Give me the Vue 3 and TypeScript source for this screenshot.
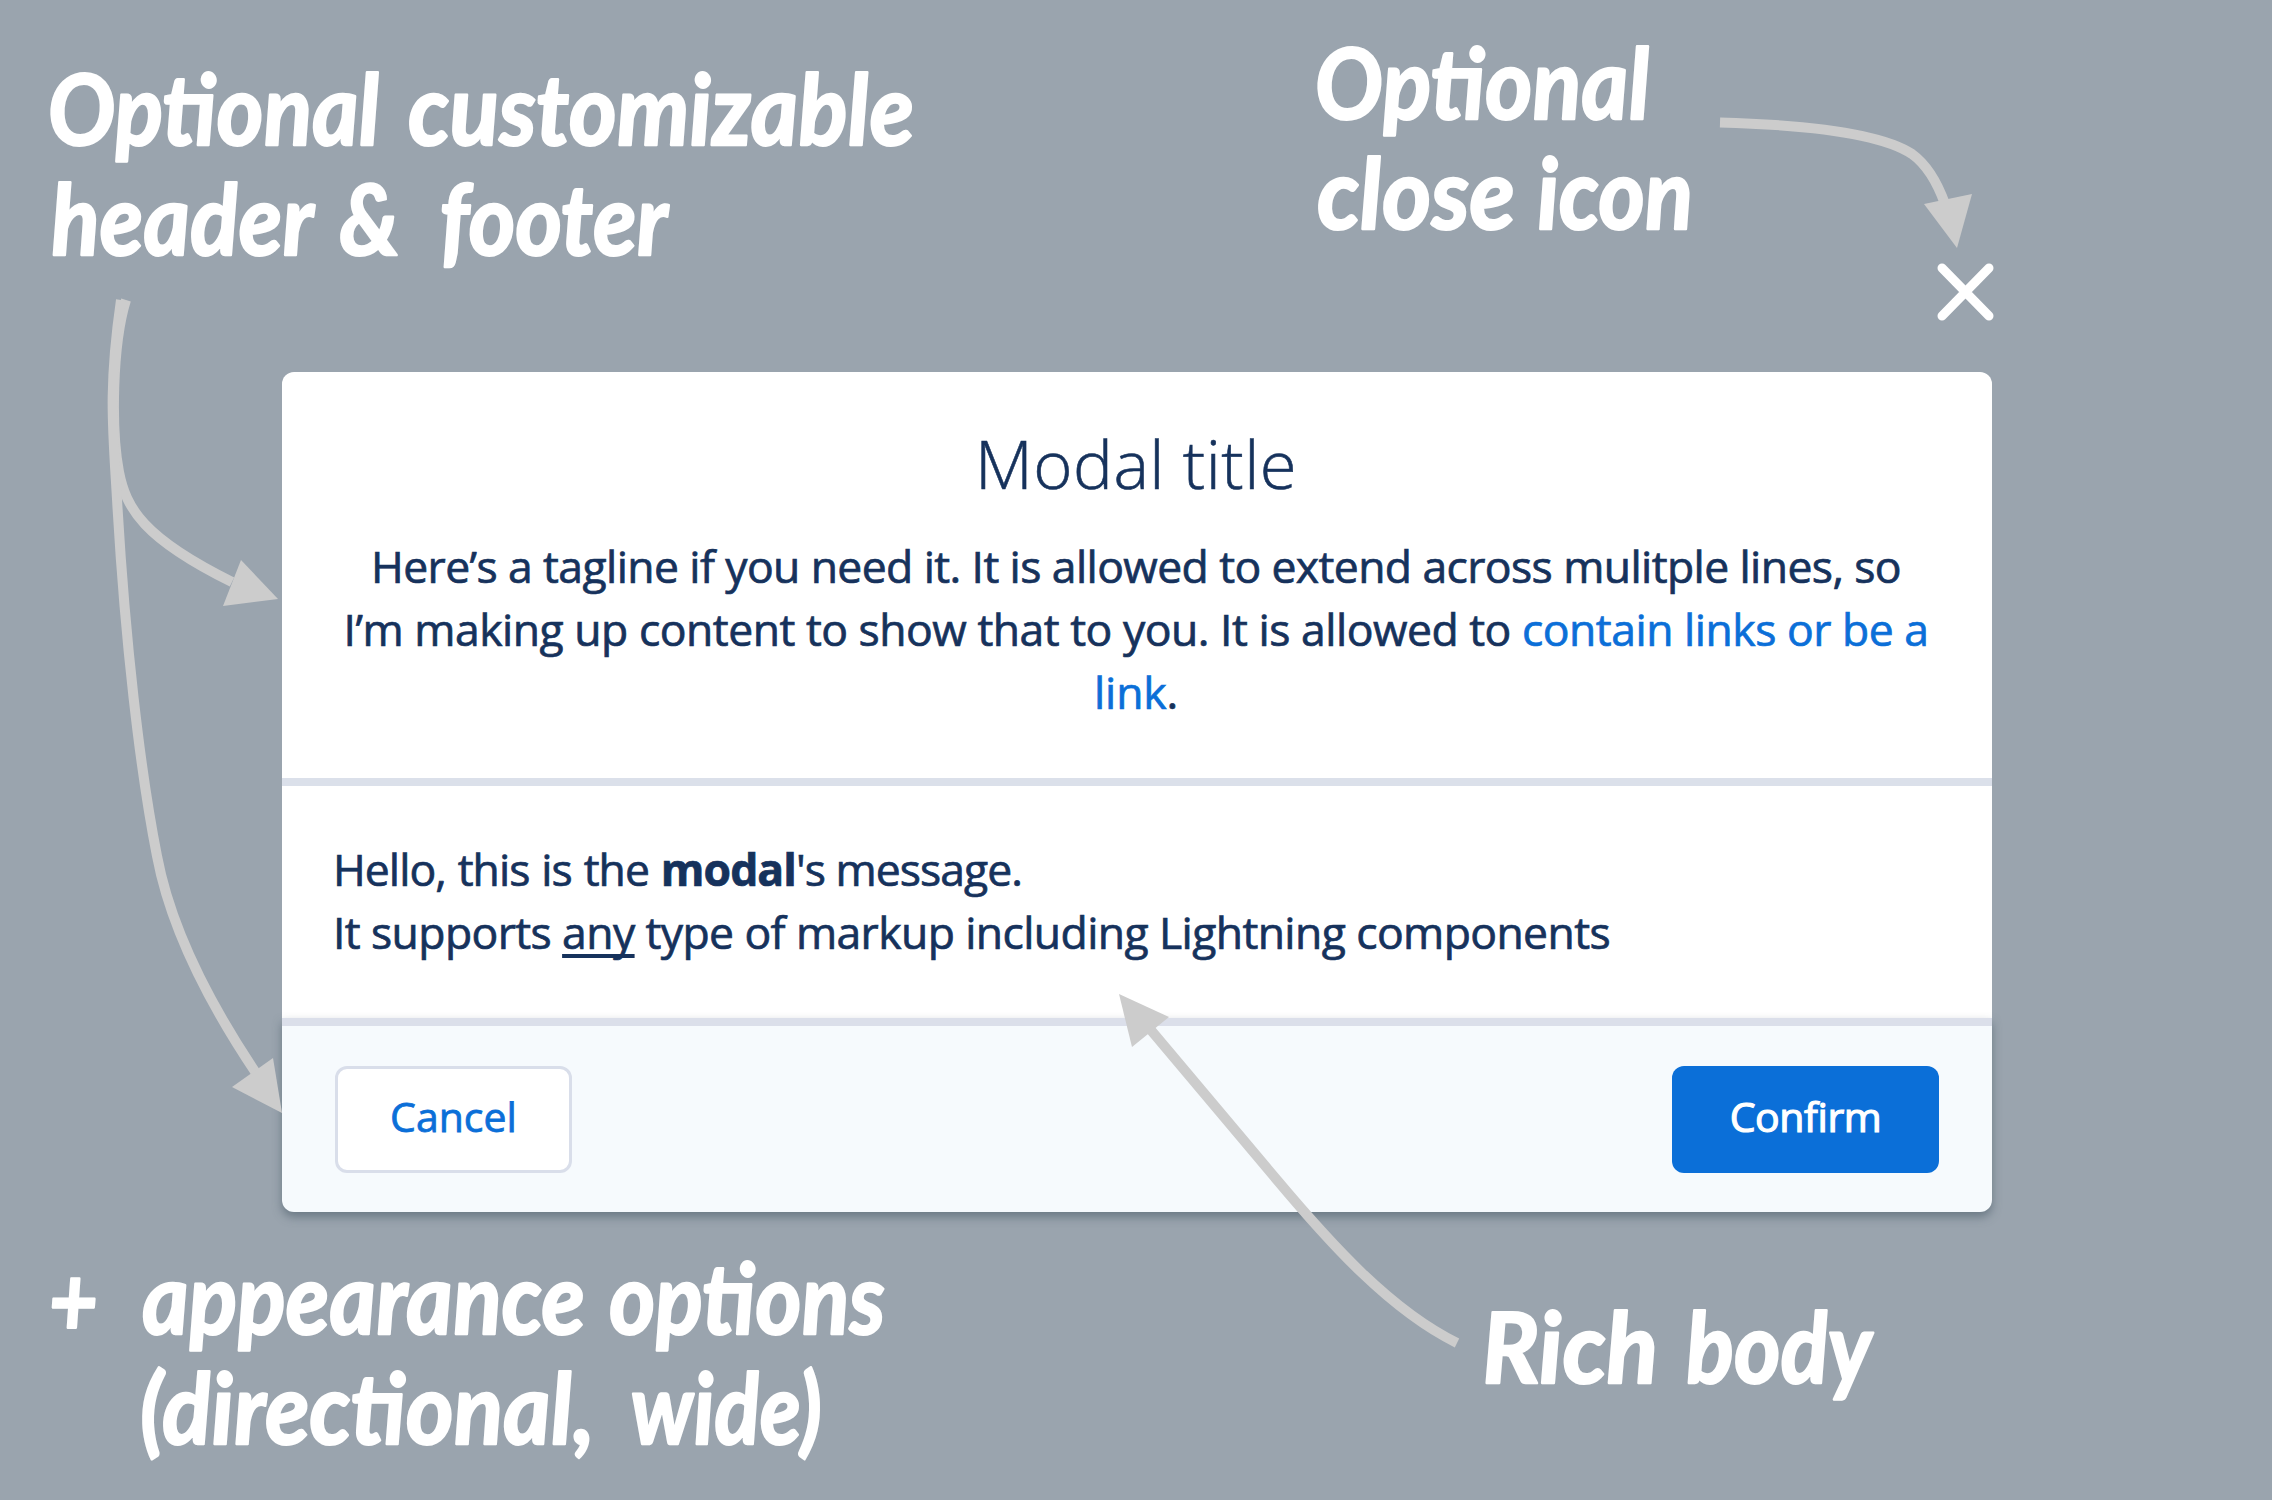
<script setup lang="ts">
interface Note {
  text: string
  x: number
  y: number
  width: number
}

// Handwritten notes: left edge, baseline and drawn width of every word.
const notes: Note[] = [
  { text: 'Optional', x: 49, y: 145, width: 332 },
  { text: 'customizable', x: 409, y: 145, width: 506 },
  { text: 'header', x: 52, y: 255, width: 263 },
  { text: '&', x: 340, y: 255, width: 60 },
  { text: 'footer', x: 441, y: 255, width: 228 },
  { text: 'Optional', x: 1316, y: 119, width: 335 },
  { text: 'close', x: 1318, y: 229, width: 198 },
  { text: 'icon', x: 1538, y: 229, width: 156 },
  { text: '+', x: 50, y: 1336, width: 49 },
  { text: 'appearance', x: 143, y: 1334, width: 443 },
  { text: 'options', x: 610, y: 1334, width: 276 },
  { text: '(directional,', x: 141, y: 1444, width: 454 },
  { text: 'wide)', x: 632, y: 1444, width: 191 },
  { text: 'Rich', x: 1483, y: 1383, width: 176 },
  { text: 'body', x: 1687, y: 1383, width: 186 },
]

// Tracks a line of text so that it spans the requested width.
const vFit = {
  mounted(el: HTMLElement, binding: { value: number }) {
    const natural = el.getBoundingClientRect().width
    const count = (el.textContent ?? '').length
    el.style.letterSpacing = `${(binding.value - natural) / count}px`
  },
}
</script>

<template>
  <main class="stage">
    <section class="modal">
      <header class="modal-header">
        <h2><span v-fit="322" class="line">Modal title</span></h2>
        <p>
          <span v-fit="1530" class="line">Here’s a tagline if you need it. It is allowed to extend across mulitple lines, so</span><br />
          <span v-fit="1585" class="line">I’m making up content to show that to you. It is allowed to <a>contain links or be a</a></span><br />
          <span v-fit="84" class="line"><a>link</a>.</span>
        </p>
      </header>
      <div class="modal-body">
        <p>
          <span v-fit="689" class="line"><span class="lead">Hello, this is the </span><strong>modal</strong>'s message.</span><br />
          <span v-fit="1277" class="line">It supports <u>any</u> type of markup including Lightning components</span>
        </p>
      </div>
      <footer class="modal-footer">
        <button class="cancel" type="button">Cancel</button>
        <button class="confirm" type="button">Confirm</button>
      </footer>
    </section>

    <svg class="overlay" viewBox="0 0 2272 1500" width="2272" height="1500">
      <g class="arrows">
        <path d="M1720 122.5C1815 125 1882 134 1912 154C1930 167 1940 190 1945 204" />
        <path d="M126 300C112 345 111 430 119 472C126 508 143 538 232 582" />
        <path d="M121 300C108 390 113 430 117 499C125 640 140 770 157 856C170 925 205 997 256 1073" />
        <path d="M1150 1029L1277 1180C1330 1243 1390 1310 1457 1343" />
      </g>
      <g class="heads">
        <path d="M1924 204L1972 194L1957 248Z" />
        <path d="M223 606L241 560L278 599Z" />
        <path d="M232 1087L273 1058L282 1113Z" />
        <path d="M1119 994L1169 1017L1132 1047Z" />
      </g>
      <path class="close" d="M1942 268L1989 316M1989 268L1942 316" />
      <text
        v-for="(note, index) in notes"
        :key="index"
        class="note"
        :transform="`translate(${note.x} ${note.y}) skewX(2)`"
        :textLength="note.width"
        lengthAdjust="spacingAndGlyphs"
      >{{ note.text }}</text>
    </svg>
  </main>
</template>

<style>
body {
  background: #9aa4ae;
}
</style>

<style scoped>
.stage {
  position: relative;
  box-sizing: border-box;
  width: 2272px;
  height: 1500px;
  padding: 372px 280px 0 282px;
  overflow: hidden;
  background: #9aa4ae;
  color: #16325c;
  font-family: 'Open Sans', 'Noto Sans', sans-serif;
}

.modal {
  display: flex;
  flex-direction: column;
  width: 1710px;
  height: 840px;
}

.modal-header {
  box-sizing: border-box;
  height: 414px;
  padding-top: 47px;
  border-bottom: 8px solid #dbe0ea;
  border-radius: 12px 12px 0 0;
  background: #fff;
  text-align: center;
}

h2 {
  margin: 0;
  font-size: 67px;
  font-weight: 300;
  line-height: 88px;
  -webkit-text-stroke: 0.6px currentColor;
}

p {
  margin: 0;
  font-size: 44.5px;
  line-height: 63px;
  white-space: nowrap;
  -webkit-text-stroke: 0.7px currentColor;
}

.modal-header p {
  margin-top: 27px;
}

.line {
  display: inline-block;
}

.modal-header .line {
  margin-right: 2px;
}

.lead {
  word-spacing: 1.3px;
}

a {
  color: #0b6fd8;
}

u {
  text-decoration-thickness: 4px;
  text-underline-offset: 5px;
  text-decoration-skip-ink: none;
}

.modal-body {
  box-sizing: border-box;
  height: 232px;
  padding: 51px 51px 0;
  background: #fff;
}

.modal-footer {
  box-sizing: border-box;
  display: flex;
  align-items: center;
  justify-content: space-between;
  height: 194px;
  padding: 0 53px;
  border-top: 8px solid #dbdfea;
  border-radius: 0 0 12px 12px;
  background: #f6fafd;
  box-shadow: 0 5px 10px rgba(70, 88, 100, 0.55);
}

button {
  box-sizing: border-box;
  height: 107px;
  padding: 0 0 5px;
  border-radius: 12px;
  font-family: inherit;
  font-size: 41px;
  line-height: 1;
  -webkit-text-stroke: 0.8px currentColor;
}

.cancel {
  width: 237px;
  border: 3px solid #d9deea;
  background: #fff;
  color: #0b6fd8;
}

.confirm {
  width: 267px;
  border: 0;
  background: #0b6fd8;
  color: #fff;
  letter-spacing: -0.4px;
  -webkit-text-stroke-width: 1.2px;
}

.overlay {
  position: absolute;
  top: 0;
  left: 0;
}

.arrows {
  fill: none;
  stroke: #ccc;
  stroke-width: 10;
}

.heads {
  fill: #ccc;
}

.close {
  fill: none;
  stroke: #fff;
  stroke-width: 9;
  stroke-linecap: round;
}

.note {
  fill: #fff;
  stroke: #fff;
  stroke-width: 2.5;
  stroke-linejoin: round;
  font-family: Lato, sans-serif;
  font-size: 98px;
  font-style: italic;
  font-weight: 700;
}
</style>
